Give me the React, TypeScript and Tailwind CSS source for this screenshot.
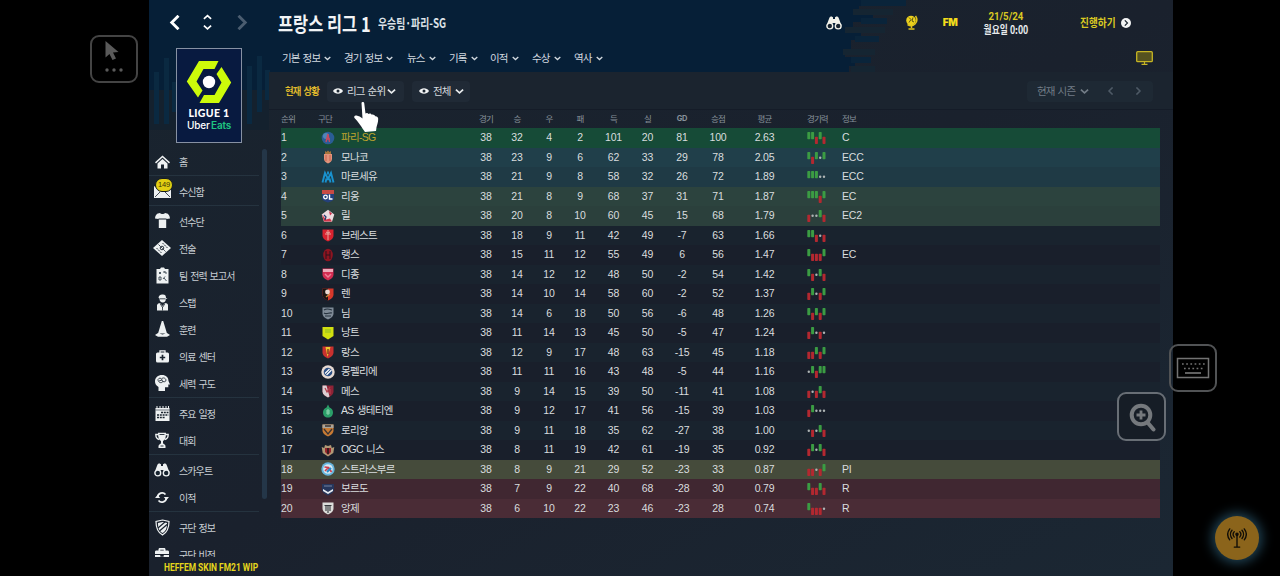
import React from "react";
import { FaBriefcase } from "react-icons/fa";

type Result = "W" | "D" | "L";

interface Team {
  name: string;
  stats: string[];
  form: string;
  info: string;
  row: string;
}

const ODD = "bg-[#191f2b]";
const EVEN = "bg-[#19232e]";

const teams: Team[] = [
  { name: "파리-SG", stats: ["38", "32", "4", "2", "101", "20", "81", "100", "2.63"], form: "WWLWL", info: "C", row: "bg-[#164b37]" },
  { name: "모나코", stats: ["38", "23", "9", "6", "62", "33", "29", "78", "2.05"], form: "WLWDW", info: "ECC", row: "bg-[#203f4a]" },
  { name: "마르세유", stats: ["38", "21", "9", "8", "58", "32", "26", "72", "1.89"], form: "WWWDD", info: "ECC", row: "bg-[#1f3a45]" },
  { name: "리옹", stats: ["38", "21", "8", "9", "68", "37", "31", "71", "1.87"], form: "WWWLW", info: "EC", row: "bg-[#2c433e]" },
  { name: "릴", stats: ["38", "20", "8", "10", "60", "45", "15", "68", "1.79"], form: "LDDWL", info: "EC2", row: "bg-[#2b403c]" },
  { name: "브레스트", stats: ["38", "18", "9", "11", "42", "49", "-7", "63", "1.66"], form: "WWLDL", info: "", row: EVEN },
  { name: "랭스", stats: ["38", "15", "11", "12", "55", "49", "6", "56", "1.47"], form: "WLLLW", info: "EC", row: ODD },
  { name: "디종", stats: ["38", "14", "12", "12", "48", "50", "-2", "54", "1.42"], form: "WLDWL", info: "", row: EVEN },
  { name: "렌", stats: ["38", "14", "10", "14", "58", "60", "-2", "52", "1.37"], form: "LWDLW", info: "", row: ODD },
  { name: "님", stats: ["38", "14", "6", "18", "50", "56", "-6", "48", "1.26"], form: "WLWLW", info: "", row: EVEN },
  { name: "낭트", stats: ["38", "11", "14", "13", "45", "50", "-5", "47", "1.24"], form: "LWDLD", info: "", row: ODD },
  { name: "랑스", stats: ["38", "12", "9", "17", "48", "63", "-15", "45", "1.18"], form: "LLWLW", info: "", row: EVEN },
  { name: "몽펠리에", stats: ["38", "11", "11", "16", "43", "48", "-5", "44", "1.16"], form: "DWLWW", info: "", row: ODD },
  { name: "메스", stats: ["38", "9", "14", "15", "39", "50", "-11", "41", "1.08"], form: "LDLWL", info: "", row: EVEN },
  { name: "AS 생테티엔", stats: ["38", "9", "12", "17", "41", "56", "-15", "39", "1.03"], form: "LWDDD", info: "", row: ODD },
  { name: "로리앙", stats: ["38", "9", "11", "18", "35", "62", "-27", "38", "1.00"], form: "DLDWL", info: "", row: EVEN },
  { name: "OGC 니스", stats: ["38", "8", "11", "19", "42", "61", "-19", "35", "0.92"], form: "LWDWL", info: "", row: ODD },
  { name: "스트라스부르", stats: ["38", "8", "9", "21", "29", "52", "-23", "33", "0.87"], form: "LLDLW", info: "PI", row: "bg-[#454b3b]" },
  { name: "보르도", stats: ["38", "7", "9", "22", "40", "68", "-28", "30", "0.79"], form: "WLLWL", info: "R", row: "bg-[#402731]" },
  { name: "앙제", stats: ["38", "6", "10", "22", "23", "46", "-23", "28", "0.74"], form: "WLLLD", info: "R", row: "bg-[#4a2c36]" },
];

const SHIELD = "M1.5 1.5h11v6c0 3-3 5-5.5 6-2.500-1-5.500-3-5.500-6z";

const crests: React.ReactNode[] = [
  <>
    <circle cx="7" cy="7" r="6.300" fill="#2a5d96" />
    <circle cx="5" cy="5" r="3" fill="#6ba0cc" opacity=".6" />
    <path d="M7 3l1.500 8M7 3l-2 8M5 8h4" stroke="#c9485c" strokeWidth="1.300" fill="none" />
  </>,
  <>
    <path d="M3 4h8v5c0 2-2 4-4 4.500C5 13 3 11 3 9z" fill="#e2937a" />
    <path d="M4 1l1.500 1L7 .5 8.500 2 10 1v3H4z" fill="#a5743c" />
    <path d="M5 5v6M9 5v6" stroke="#c8604e" strokeWidth="1" />
  </>,
  <path d="M1.500 12.500L4 3l3 6 3-6 2.500 9.500M4.500 12.500l1-4M9.500 12.500l-1-4M7 1.500v3" fill="none" stroke="#1992cf" strokeWidth="1.900" />,
  <>
    <path d="M1 1h12v4H1z" fill="#c84a43" />
    <path d="M1 5h12v5c-1 2-4 3-6 3.500C5 13 2 12 1 10z" fill="#24407c" />
    <circle cx="4.500" cy="8" r="1.800" fill="none" stroke="#fff" strokeWidth="1.300" />
    <path d="M8.500 5.500V10h3" fill="none" stroke="#fff" strokeWidth="1.400" />
  </>,
  <>
    <path d="M7 .8l6.300 4.700-2.300 7.300H3L.7 5.500z" fill="#ecdce0" />
    <path d="M1 5.500L3 12.500h8l-2-3-4 1z" fill="#d3374a" />
    <path d="M8 2l3 2.500-2 2z" fill="#c8314a" />
    <path d="M3 6l2 2-1 3" stroke="#26396f" strokeWidth="1.200" fill="none" />
  </>,
  <>
    <path d={SHIELD} fill="#d8232f" />
    <path d="M7 2v10M4 6h6M5 4l2 1 2-1" stroke="#e9a49c" strokeWidth="1" fill="none" />
  </>,
  <>
    <ellipse cx="7" cy="7" rx="4.800" ry="6.300" fill="#8e1420" />
    <path d="M5 3v8M9 3v8M5 7h4" stroke="#2d121c" strokeWidth="1" />
  </>,
  <>
    <path d={SHIELD} fill="#d42c51" />
    <path d="M2 2h10v3H2z" fill="#efa9b8" />
    <path d="M4 7l3 3 3-3" stroke="#f07e96" strokeWidth="1.500" fill="none" />
  </>,
  <>
    <path d={SHIELD} fill="#d7382b" />
    <path d="M1.500 1.500H7v12c-3-1-5.500-3-5.500-6z" fill="#1b1512" />
    <circle cx="6.500" cy="5" r="2.400" fill="#e9d9cf" />
    <path d="M5 10l4-3" stroke="#d79042" strokeWidth="1.200" />
  </>,
  <>
    <path d={SHIELD} fill="#7f8b97" />
    <path d="M3 4c3-2 5-1 8 0M3 7c3 2 5-1 8 0M4 10h6" stroke="#26323e" strokeWidth="1.200" fill="none" />
  </>,
  <>
    <path d="M1.500 1h11v9L7 13.500 1.500 10z" fill="#d2e010" />
    <path d="M4 4h6M4 6h6" stroke="#88b92b" strokeWidth="1" />
  </>,
  <>
    <path d={SHIELD} fill="#c9312f" />
    <path d="M4.500 2l2 10 3-10z" fill="#edc92e" />
    <path d="M7 4v5" stroke="#7c2020" strokeWidth="1.300" />
  </>,
  <>
    <circle cx="7" cy="7" r="6.700" fill="#e6d9d2" />
    <circle cx="7" cy="7" r="4.300" fill="#2c4f84" />
    <path d="M4 8.500L8.500 4M5.500 10l5-5" stroke="#fff" strokeWidth="1.100" />
  </>,
  <>
    <path d={SHIELD} fill="#8e2336" />
    <path d="M1.500 1.500h4l3 11-1.500 1C4 12 1.500 10 1.500 7.500z" fill="#dccfd3" />
    <path d="M4 4l2 4 3-5M9 5v5" stroke="#b23d4c" strokeWidth="1.200" fill="none" />
  </>,
  <>
    <path d="M7 .5l1.500 3c2 .5 3.500 2.500 3.500 5 0 3-2 5-5 5s-5-2-5-5c0-2.500 1.500-4.500 3.500-5z" fill="#2b9f69" />
    <path d="M5 7h4M5 9h4M7 5v6" stroke="#9adbb9" strokeWidth=".9" />
  </>,
  <>
    <path d={SHIELD} fill="#c77b34" />
    <path d="M1.500 1.500h11V5h-11z" fill="#a9a49a" />
    <path d="M3 6l4 5 4-5M4 3h6" stroke="#3b3432" strokeWidth="1.300" fill="none" />
  </>,
  <>
    <path d="M.7 4l2.500 1L4 2l3 1 3-1 .8 3 2.500-1-1 6L7 13.500 1.700 10z" fill="#b29875" />
    <path d="M4 5h6v4l-3 3-3-3z" fill="#97252d" />
    <path d="M7 5v6" stroke="#21181b" strokeWidth="1.500" />
  </>,
  <>
    <circle cx="7" cy="7" r="6.700" fill="#65b4dc" />
    <circle cx="7" cy="7" r="4.800" fill="#d6e8f1" />
    <path d="M3.500 5l4 .5 3 4.500M4 9l3-3" stroke="#cd3c4b" strokeWidth="1.700" fill="none" />
    <path d="M6 10l4-4" stroke="#238dcb" strokeWidth="2" />
  </>,
  <>
    <path d="M1 2h12v6c0 2-3 4-6 5.500C4 12 1 10 1 8z" fill="#26365c" />
    <path d="M2 7l5 3 5-3v2l-5 3-5-3z" fill="#e6eaf0" />
    <path d="M3 4h8" stroke="#72819f" strokeWidth="1" />
  </>,
  <>
    <path d={SHIELD} fill="#dcdcda" />
    <path d="M3.500 4.500h7M5 4v6M7 4v8M9 4v6" stroke="#35383c" strokeWidth="1.100" />
  </>,
];

const columns = ["경기", "승", "우", "패", "득", "실", "GD", "승점", "평균"];
const GRID =
  "grid grid-cols-[37px_152px_32px_30px_34px_28px_39px_29px_40px_32px_61px_47px_1fr] items-center";

function Chevron({ size = 7, dir = "down", className = "" }: { size?: number; dir?: "down" | "left" | "right" | "up"; className?: string }) {
  const paths = {
    down: "M1 3l4 3.500L9 3",
    up: "M1 6.500L5 3l4 3.500",
    left: "M7 .5L2.500 5 7 9.500",
    right: "M3 .5L7.500 5 3 9.500",
  };
  return (
    <svg width={size} height={size} viewBox="0 0 10 10" fill="none" stroke="currentColor" strokeWidth="1.900" className={`shrink-0 ${className}`}>
      <path d={paths[dir]} />
    </svg>
  );
}

function Eye() {
  return (
    <svg width="10" height="8" viewBox="0 0 10 8" className="shrink-0">
      <path d="M0 4C2 .3 8 .3 10 4 8 7.700 2 7.700 0 4z" fill="#f1f3f4" />
      <circle cx="5" cy="4" r="1.500" fill="#1c2631" />
    </svg>
  );
}

function Binoculars() {
  return (
    <svg width="16" height="14" viewBox="0 0 16 14">
      <path d="M3.500 1.500L5 .3l2 1V3h2V1.300l2-1 1.500 1.200 3 8H9.500V7h-3v2.500h-6z" fill="currentColor" />
      <circle cx="3.800" cy="10" r="2.900" fill="#16222e" stroke="currentColor" strokeWidth="1.400" />
      <circle cx="12.200" cy="10" r="2.900" fill="#16222e" stroke="currentColor" strokeWidth="1.400" />
    </svg>
  );
}

function FormBars({ form }: { form: string }) {
  return (
    <svg width="20" height="14" viewBox="0 0 20 14" className="ml-3">
      {form.split("").map((c, i) => {
        const x = i * 3.8 + 0.3;
        const result = c as Result;
        if (result === "D") return <circle key={i} cx={x + 1.5} cy="6.800" r="1.200" fill="#aeb4b4" />;
        return (
          <rect
            key={i}
            x={x}
            y={result === "W" ? 1 : 5.8}
            width="3"
            height="7.200"
            rx=".7"
            fill={result === "W" ? "#3b9c43" : "#b32830"}
          />
        );
      })}
    </svg>
  );
}

const icons: Record<string, React.ReactNode> = {
  home: (
    <svg width="15" height="14" viewBox="0 0 15 14" fill="currentColor">
      <path d="M7.500 .5L15 7.300l-1 1.100-6.500-5.800L1 8.400 0 7.300z" />
      <path d="M2.500 8.500l5-4.500 5 4.500v5H9V9.500H6v4H2.500z" />
    </svg>
  ),
  mail: (
    <svg width="17" height="13" viewBox="0 0 17 13" fill="currentColor">
      <path d="M0 1l8.500 6L17 1v12H0z" />
      <path d="M1 12l5-5M16 12l-5-5" stroke="#18222d" strokeWidth=".8" />
    </svg>
  ),
  shirt: (
    <svg width="15" height="16" viewBox="0 0 15 16" fill="currentColor">
      <path d="M5 0c1 1.300 4 1.300 5 0 3 .3 4.600 1.700 5 5.500l-3.500.5V5.500h-8V6L0 5.500C.4 1.700 2 .3 5 0z" />
      <path d="M3.800 6.500h7.400V15H3.800z" />
    </svg>
  ),
  tactics: (
    <svg width="18" height="16" viewBox="0 0 18 16">
      <path d="M9 0l9 8-9 8-9-8z" fill="currentColor" />
      <path d="M5.500 4.500l7 7M3.500 8l5 5M9.500 3l5 5" stroke="#1a242f" strokeWidth=".9" strokeDasharray="2 .7" />
      <circle cx="9" cy="8" r="1.800" fill="none" stroke="#1a242f" strokeWidth=".9" />
    </svg>
  ),
  report: (
    <svg width="13" height="17" viewBox="0 0 13 17">
      <path d="M1 2h3L5 .5h3L9 2h3.500v14.500h-12V2z" fill="currentColor" />
      <path d="M3 5l2 2m0-2L3 7m5-2h2v2M3 10h2v3H3zm5 1l2.500 3M9 9.500L7 12M8 4v2" stroke="#22303b" strokeWidth=".8" fill="none" />
    </svg>
  ),
  staff: (
    <svg width="13" height="17" viewBox="0 0 13 17">
      <path d="M2.500 3.500C3 1 5 0 7 .5c2 0 3 1 3 3.500l1.500 1H9.800c0 2-1 3.600-3 3.600S3.600 7 3.500 5z" fill="currentColor" />
      <path d="M1 16.500V11c1-2 3-2 3-2l2.500 3L9 9s2.500 0 3 2v5.500z" fill="currentColor" />
      <path d="M4 9.500l2.500 4 2.500-4M6.500 13v3.500M3.500 4.800h6" stroke="#1a242f" strokeWidth=".8" fill="none" />
    </svg>
  ),
  cone: (
    <svg width="15" height="16" viewBox="0 0 15 16" fill="currentColor">
      <path d="M6.800 0h1.400L12 12.500H3zM0 14l3-2 4.500 1.500L12 12l3 2-3 1.700H3z" />
    </svg>
  ),
  medical: (
    <svg width="13" height="13" viewBox="0 0 13 13">
      <path d="M4 3V.8h5V3" fill="none" stroke="currentColor" strokeWidth="1.300" />
      <rect y="2.500" width="13" height="10" rx="1.500" fill="currentColor" />
      <path d="M6.500 4.800v5.400M3.800 7.500h5.400" stroke="#1a242f" strokeWidth="1.700" />
    </svg>
  ),
  head: (
    <svg width="15" height="16" viewBox="0 0 15 16">
      <path d="M7 0c4 0 6.500 2.500 6.500 6L15 9.500h-1.700v2.800H10V16H3.500v-4C1 10.500 0 8.500 0 6.500 0 2.500 3 0 7 0z" fill="currentColor" />
      <path d="M3 4.500c1-2 3-1.500 3.500-.5C8 2 10.500 3 11 5c0 2-2 2-3 1.500C7 8.500 3 8 3 4.500zm3.500-.5l1.500 3M4 6l3-1" stroke="#1a242f" strokeWidth=".8" fill="none" />
    </svg>
  ),
  calendar: (
    <svg width="15" height="15" viewBox="0 0 15 15">
      <path d="M.5 2h14v13H.5z" fill="currentColor" />
      <path d="M2 0v2M5 0v2M8 0v2M11 0v2M13.500 0v2" stroke="currentColor" strokeWidth="1" />
      <path d="M6 6.500h7.500M2 9h11.500M2 11.500h8" stroke="#1a242f" strokeWidth="1.600" strokeDasharray="2 .8" />
      <path d="M.5 4h14" stroke="#1a242f" strokeWidth=".6" />
    </svg>
  ),
  trophy: (
    <svg width="14" height="17" viewBox="0 0 14 17">
      <path d="M3 2.500H.8c0 3 1.200 4.500 3.400 5M11 2.500h2.200c0 3-1.200 4.500-3.400 5" fill="none" stroke="currentColor" strokeWidth="1.300" />
      <path d="M3 .8h8c0 5-1 7.200-3 8.200v2c0 1 2.500 1.500 2.500 3V16h-7v-2c0-1.500 2.500-2 2.500-3V9C4 8 3 5.800 3 .8z" fill="currentColor" />
      <path d="M4.500 2.500h5M5.500 14h3" stroke="#1a242f" strokeWidth=".9" />
    </svg>
  ),
  scout: <Binoculars />,
  transfer: (
    <svg width="14" height="13" viewBox="0 0 14 13" fill="none" stroke="currentColor" strokeWidth="1.800">
      <path d="M2.600 6A4.500 4.500 0 0 1 10.500 3.500M11.400 7A4.500 4.500 0 0 1 3.500 9.500" />
      <path d="M8.800 6H14l-2.600 3zM0 7h5.200L2.600 4z" fill="currentColor" stroke="none" />
    </svg>
  ),
  shield: (
    <svg width="15" height="17" viewBox="0 0 15 17">
      <path d="M7.500 1L14 2.500c0 6-1 10.500-6.500 13.500C2 13 1 8.500 1 2.500z" fill="none" stroke="currentColor" strokeWidth="1.200" />
      <path d="M3 4l4.500-1L12 4c0 5-1 8-4.500 10C4 12 3 9 3 4z" fill="currentColor" />
      <path d="M3 9l7-6M4.500 12L12 5.500" stroke="#1a242f" strokeWidth="1.200" />
    </svg>
  ),
  briefcase: <FaBriefcase size={14} />,
};

const menuGroups = [
  { box: "h-[29px] pt-[1px]", items: [["home", "홈"]] },
  { box: "h-[30px] pt-[1.5px]", items: [["mail", "수신함"]] },
  {
    box: "h-[192px] pt-[1.5px]",
    items: [
      ["shirt", "선수단"],
      ["tactics", "전술"],
      ["report", "팀 전력 보고서"],
      ["staff", "스탭"],
      ["cone", "훈련"],
      ["medical", "의료 센터"],
      ["head", "세력 구도"],
    ],
  },
  { box: "h-[57px] pt-[1.5px]", items: [["calendar", "주요 일정"], ["trophy", "대회"]] },
  { box: "h-[57px] pt-[1.5px]", items: [["scout", "스카우트"], ["transfer", "이적"]] },
  { box: "h-[57px] pt-[1.5px]", items: [["shield", "구단 정보"], ["briefcase", "구단 비전"]] },
];

const tabs = [
  { label: "기본 정보", width: "w-[62px]" },
  { label: "경기 정보", width: "w-[63px]" },
  { label: "뉴스", width: "w-[42px]" },
  { label: "기록", width: "w-[41px]" },
  { label: "이적", width: "w-[42px]" },
  { label: "수상", width: "w-[42px]" },
  { label: "역사", width: "w-[42px]" },
];

function LeagueLogo() {
  return (
    <div className="ml-[27px] mt-[3px] flex h-[95px] w-[66px] shrink-0 flex-col items-center border border-[#8791a3] bg-[#081a40]">
      <svg width="46" height="44" viewBox="0 0 46 44" className="mt-[11px] shrink-0" fill="#cdfb0a">
        <path d="M13 1h19.500l-4 8H17.500l-7 12.500 6 9-4.500 7L.8 21.500z" />
        <path d="M35.500 7L45.200 22.500 33 43H13.500l4.500-8h10.500L35.500 22.500 30.500 14z" />
        <circle cx="23" cy="22" r="6.200" fill="#fff" />
      </svg>
      <div className="mt-[3px] whitespace-nowrap font-['Lato'] text-[10.5px] font-black leading-[12px] tracking-[0.3px] text-white">LIGUE 1</div>
      <div className="whitespace-nowrap font-['Inter','Liberation_Sans',sans-serif] text-[10px] font-medium leading-[12px] tracking-[-0.2px] text-white">
        Uber <span className="-ml-[1px] font-semibold text-[#1fc481]">Eats</span>
      </div>
    </div>
  );
}

function Sidebar() {
  return (
    <aside className="flex h-[576px] w-[120px] shrink-0 flex-col">
      <div className="flex h-[45px] shrink-0 items-center pl-[19px] text-white">
        <Chevron size={15} dir="left" />
        <div className="ml-[19px] flex w-[10px] flex-col items-center gap-[1px]">
          <Chevron size={9} dir="up" />
          <Chevron size={9} />
        </div>
        <Chevron size={15} dir="right" className="ml-[22px] text-[#4b5d70]" />
      </div>
      <LeagueLogo />
      <div className="mt-[4px] flex h-[410px] shrink-0 overflow-hidden">
        <nav className="w-[110px] shrink-0">
          {menuGroups.map((group, i) => (
            <div key={i} className={`${group.box} border-b border-[#25333f]`}>
              {group.items.map(([icon, label]) => (
                <div key={label} className="flex h-[27px] items-center">
                  <span className="relative flex w-[26px] shrink-0 items-center justify-center text-[#eef1f2]">
                    {icons[icon]}
                    {icon === "mail" && (
                      <span className="absolute left-[6px] top-[-7px] flex h-[14px] w-[18px] items-center justify-center rounded-full border border-[#141b22] bg-[#e3cf12] font-['Liberation_Sans'] text-[7.5px] tracking-[-0.2px] text-[#38330a]">
                        149
                      </span>
                    )}
                  </span>
                  <span className="ml-[4px] whitespace-nowrap text-[10px] tracking-[-0.9px] text-[#c9cfd4] [word-spacing:1.5px]">{label}</span>
                </div>
              ))}
            </div>
          ))}
        </nav>
        <div className="ml-[3px] mt-[2px] h-[350px] w-[5px] rounded-full bg-[#243648]"></div>
      </div>
      <div className="ml-[15px] mt-[3px] flex h-[16px] w-[93px] shrink-0 items-center whitespace-nowrap">
        <span className="block origin-left scale-x-[.765] font-['Roboto'] text-[11px] font-bold leading-[14px] text-[#e5d51c]">HEFFEM SKIN FM21 WIP</span>
      </div>
    </aside>
  );
}

function Header() {
  return (
    <header className="h-[72px]">
      <div className="flex h-[45px] items-center pl-[9px]">
        <div className="w-[100px] shrink-0">
          <h1 className="block origin-left scale-x-[.8] whitespace-nowrap text-[20.5px] font-bold leading-[26px] text-[#f2f4f6]">프랑스 리그 1</h1>
        </div>
        <div className="w-[70px] shrink-0">
          <span className="block origin-left scale-x-[.76] whitespace-nowrap text-[13px] font-bold leading-[20px] text-[#dde2e7]">우승팀·파리-SG</span>
        </div>
        <div className="ml-auto flex shrink-0 items-center">
          <div className="flex w-[40px] justify-center text-[#f2f2ea]">
            <Binoculars />
          </div>
          <div className="ml-[37px] flex w-[40px] justify-center">
            <svg width="13" height="15" viewBox="0 0 13 15" fill="none">
              <circle cx="6" cy="5.500" r="4.800" fill="#ecd11c" />
              <path d="M4 2.500l2 2-2 3M8 2.500L7 6l2 1" stroke="#4a4616" strokeWidth=".9" />
              <path d="M10.500 1c2 3 1.500 6-.5 8-2 1.800-5 2-7.500.5M6.500 10.500V13M3.500 14h6" stroke="#e2c61a" strokeWidth="1.500" />
            </svg>
          </div>
          <div className="flex w-[38px] justify-center font-['Inter'] text-[10px] font-black tracking-[-0.5px] text-[#f2dc1c]">FM</div>
          <div className="flex w-[74px] flex-col items-center whitespace-nowrap text-[11px] font-bold leading-[12px]">
            <span className="scale-x-[.88] font-['Roboto'] text-[11px] font-bold text-[#d9c822]">21/5/24</span>
            <span className="scale-x-[.8] text-[#e7eaec]">월요일 0:00</span>
          </div>
          <div className="ml-[37px] flex w-[93px] items-center">
            <span className="inline-block w-[41px] origin-left scale-x-[.88] whitespace-nowrap text-[11px] font-bold text-[#dbca22]">진행하기</span>
            <span className="flex h-[10px] w-[10px] items-center justify-center rounded-full bg-[#f3f4f5] text-[#1a242f]">
              <Chevron size={6} dir="right" />
            </span>
          </div>
        </div>
      </div>
      <div className="flex h-[27px] items-center pb-[1px] pl-[13px]">
        {tabs.map((tab) => (
          <div key={tab.label} className={`flex items-center gap-[4px] ${tab.width} whitespace-nowrap text-[10.5px] tracking-[-0.85px] text-[#d3dae0] [word-spacing:1.5px]`}>
            {tab.label}
            <Chevron size={7} />
          </div>
        ))}
        <svg width="17" height="14" viewBox="0 0 17 14" className="ml-auto mr-[20px]">
          <rect x=".7" y=".7" width="15.600" height="10" rx="1" fill="#55521f" stroke="#c6b524" strokeWidth="1.300" />
          <path d="M8.500 11v2M5.500 13.300h6" stroke="#c6b524" strokeWidth="1.200" />
        </svg>
      </div>
    </header>
  );
}

function Toolbar() {
  return (
    <div className="flex h-[38px] items-center whitespace-nowrap pl-[16px] text-[10.5px] tracking-[-0.85px] text-[#d6dade] [word-spacing:1.5px]">
      <span className="inline-block w-[42px] origin-left scale-x-[.89] font-bold text-[#dfb72c]">현재 상황</span>
      <div className="flex h-[21px] w-[77px] items-center rounded bg-[#202a36] pl-[6px]">
        <Eye />
        <span className="ml-[4px] w-[40px]">리그 순위</span>
        <Chevron size={9} className="text-[#e8ebed]" />
      </div>
      <div className="ml-[8px] flex h-[21px] w-[58px] items-center rounded bg-[#202a36] pl-[7px]">
        <Eye />
        <span className="ml-[4px] w-[22px]">전체</span>
        <Chevron size={9} className="text-[#e8ebed]" />
      </div>
      <div className="ml-auto mr-[20px] flex h-[21px] w-[126px] items-center rounded bg-[#1e2934] pl-[10px] text-[#737d87]">
        <span className="w-[43px]">현재 시즌</span>
        <Chevron size={9} />
        <Chevron size={8} dir="left" className="ml-[18px] text-[#4e5a66]" />
        <Chevron size={8} dir="right" className="ml-[19px] text-[#4e5a66]" />
      </div>
    </div>
  );
}

function LeagueTable() {
  return (
    <div className="ml-[12px] w-[879px]">
      <div className={`${GRID} h-[18px] whitespace-nowrap pb-[2px] text-[8.5px] leading-[14px] tracking-[-0.9px] text-[#87919a]`}>
        <span>순위</span>
        <span>구단</span>
        {columns.map((col) => (
          <span key={col} className={col === "GD" ? "pt-[1px] text-center font-['Inter'] text-[7.5px] font-bold leading-[14px] tracking-[-0.2px]" : "text-center"}>
            {col}
          </span>
        ))}
        <span className="pl-[12px]">경기력</span>
        <span>정보</span>
      </div>
      {teams.map((team, index) => (
        <div key={team.name} className={`${GRID} h-[19.5px] whitespace-nowrap pt-[1px] font-['Liberation_Sans','Noto_Sans_CJK_KR',sans-serif] text-[10.5px] tracking-[-0.2px] text-[#d9dddf] ${team.row}`}>
          <span>{index + 1}</span>
          <span className="flex items-center">
            <svg width="14" height="14" viewBox="0 0 14 14" className="-mt-[1px] ml-[3px] shrink-0">
              {crests[index]}
            </svg>
            <span className={`ml-[6px] tracking-[-0.7px] [word-spacing:1px] ${index === 0 ? "text-[#bfa52d]" : ""}`}>{team.name}</span>
          </span>
          {team.stats.map((value, i) => (
            <span key={i} className="text-center">
              {value}
            </span>
          ))}
          <FormBars form={team.form} />
          <span>{team.info}</span>
        </div>
      ))}
    </div>
  );
}

// Equaliser style stripes behind the header and the league badge
const leftBars = [
  [5, 72, 52], [15, 58, 66], [23, 82, 30], [98, 66, 58], [108, 56, 56], [116, 70, 30],
];
const rightBars = [
  [712, 0, 45], [704, 9, 40], [712, 18, 26], [696, 27, 40], [706, 36, 24], [694, 49, 32], [702, 57, 20], [702, 66, 24],
];

function Backdrop() {
  return (
    <svg width="1024" height="576" viewBox="0 0 1024 576" className="absolute left-0 top-0">
      <defs>
        <linearGradient id="body" x1="0" y1="0" x2="1" y2="1">
          <stop offset="0" stopColor="#19242f" />
          <stop offset=".5" stopColor="#1a212d" />
          <stop offset="1" stopColor="#1b2733" />
        </linearGradient>
      </defs>
      <rect width="1024" height="576" fill="url(#body)" />
      <path d="M0 0h722v6h-12v8h14v8h-20v9h8v9h-10v9h-6v8h10v9h-6v6H120v38H0z" fill="#061f37" />
      <path d="M0 90h120v40H0z" fill="#14212e" />
      {leftBars.map(([x, y, h]) => (
        <rect key={x} x={x} y={y} width="5" height={h} fill="#0a2941" />
      ))}
      {rightBars.map(([x, y, w], i) => (
        <rect key={y} x={x} y={y} width={w} height="6" fill={i % 2 ? "#152532" : "#0a243a"} />
      ))}
      <rect x="120" y="72" width="904" height="37" fill="#1b242f" />
      <rect x="120" y="109" width="904" height="1" fill="#151c28" />
    </svg>
  );
}

function FloatingControls() {
  return (
    <>
      <svg width="28" height="34" viewBox="0 0 28 34" className="absolute left-[353px] top-[100px]">
        <path
          d="M8.500 3c.3-1.300 2.400-1.300 2.700 0l1.300 10.500c1-1 2.500-.7 3 .5 1-1 2.700-.5 3.200.8 1-.8 3 0 3.500 1.500 1.200-.5 3 .8 3 2.500 0 4-1.200 6-1.700 8.500l-.5 3.700-11 1-2.500-3.500C8 26 5 21.500 1.500 18c-.8-1.500.2-3 2-2.500 2 .4 4.500 1.600 6 3z"
          fill="#fff"
        />
      </svg>
      <div className="absolute left-[90px] top-[35px] flex h-[48px] w-[48px] items-center justify-center rounded-[9px] border-2 border-[#444]">
        <svg width="28" height="36" viewBox="0 0 28 36" fill="#5a5a5a" className="-mt-[6px]">
          <path d="M5.500 3v16.500l4-3.500 3 6 3.500-1.500-3-6 5.500-.5z" />
          <circle cx="7" cy="32" r="1.700" />
          <circle cx="14" cy="32" r="1.700" />
          <circle cx="21" cy="32" r="1.700" />
        </svg>
      </div>
      <div className="absolute left-[1169px] top-[344px] flex h-[48px] w-[48px] items-center justify-center rounded-[9px] border-2 border-[#515355]">
        <svg width="34" height="22" viewBox="0 0 34 22" fill="none" stroke="#737373">
          <rect x="1.500" y="1.500" width="31" height="19" strokeWidth="1.500" />
          <path d="M6 7h23M8 11.500h19" strokeWidth="1.700" strokeDasharray="1.700 2.500" />
          <path d="M9 16h16" strokeWidth="1.700" />
        </svg>
      </div>
      <div className="absolute left-[1117px] top-[392px] flex h-[49px] w-[49px] items-center justify-center rounded-[9px] border-2 border-[#686e75] bg-[#161d26]">
        <svg width="28" height="30" viewBox="0 0 28 30" fill="none" stroke="#75797d">
          <circle cx="13" cy="13" r="9.300" strokeWidth="4" />
          <path d="M13 8.500v9M8.500 13h9" strokeWidth="2.800" />
          <path d="M20 21l5.500 6.500" strokeWidth="4" strokeLinecap="round" />
        </svg>
      </div>
      <div className="absolute left-[1215px] top-[516px] flex h-[44px] w-[44px] items-center justify-center rounded-full bg-[#8b641b] shadow-[0_0_12px_3px_#214557]">
        <svg width="20" height="22" viewBox="0 0 22 24" fill="none" stroke="#100d07" strokeWidth="1.500" strokeLinecap="round">
          <path d="M11 9v12M8 22h6" />
          <circle cx="11" cy="8" r="1.200" fill="#100d07" />
          <path d="M8 5a4.500 4.500 0 0 0 0 6M5.500 3.500a7 7 0 0 0 0 9M3 2a10 10 0 0 0 0 12M14 5a4.500 4.500 0 0 1 0 6M16.500 3.500a7 7 0 0 1 0 9M19 2a10 10 0 0 1 0 12" />
        </svg>
      </div>
    </>
  );
}

export default function App() {
  return (
    <div className="relative h-[576px] w-[1280px] overflow-hidden bg-black font-['Noto_Sans_CJK_KR',sans-serif]">
      <div className="relative ml-[149px] h-[576px] w-[1024px] overflow-hidden">
        <Backdrop />
        <div className="relative flex">
          <Sidebar />
          <main className="flex-1">
            <Header />
            <Toolbar />
            <LeagueTable />
          </main>
        </div>
      </div>
      <FloatingControls />
    </div>
  );
}
